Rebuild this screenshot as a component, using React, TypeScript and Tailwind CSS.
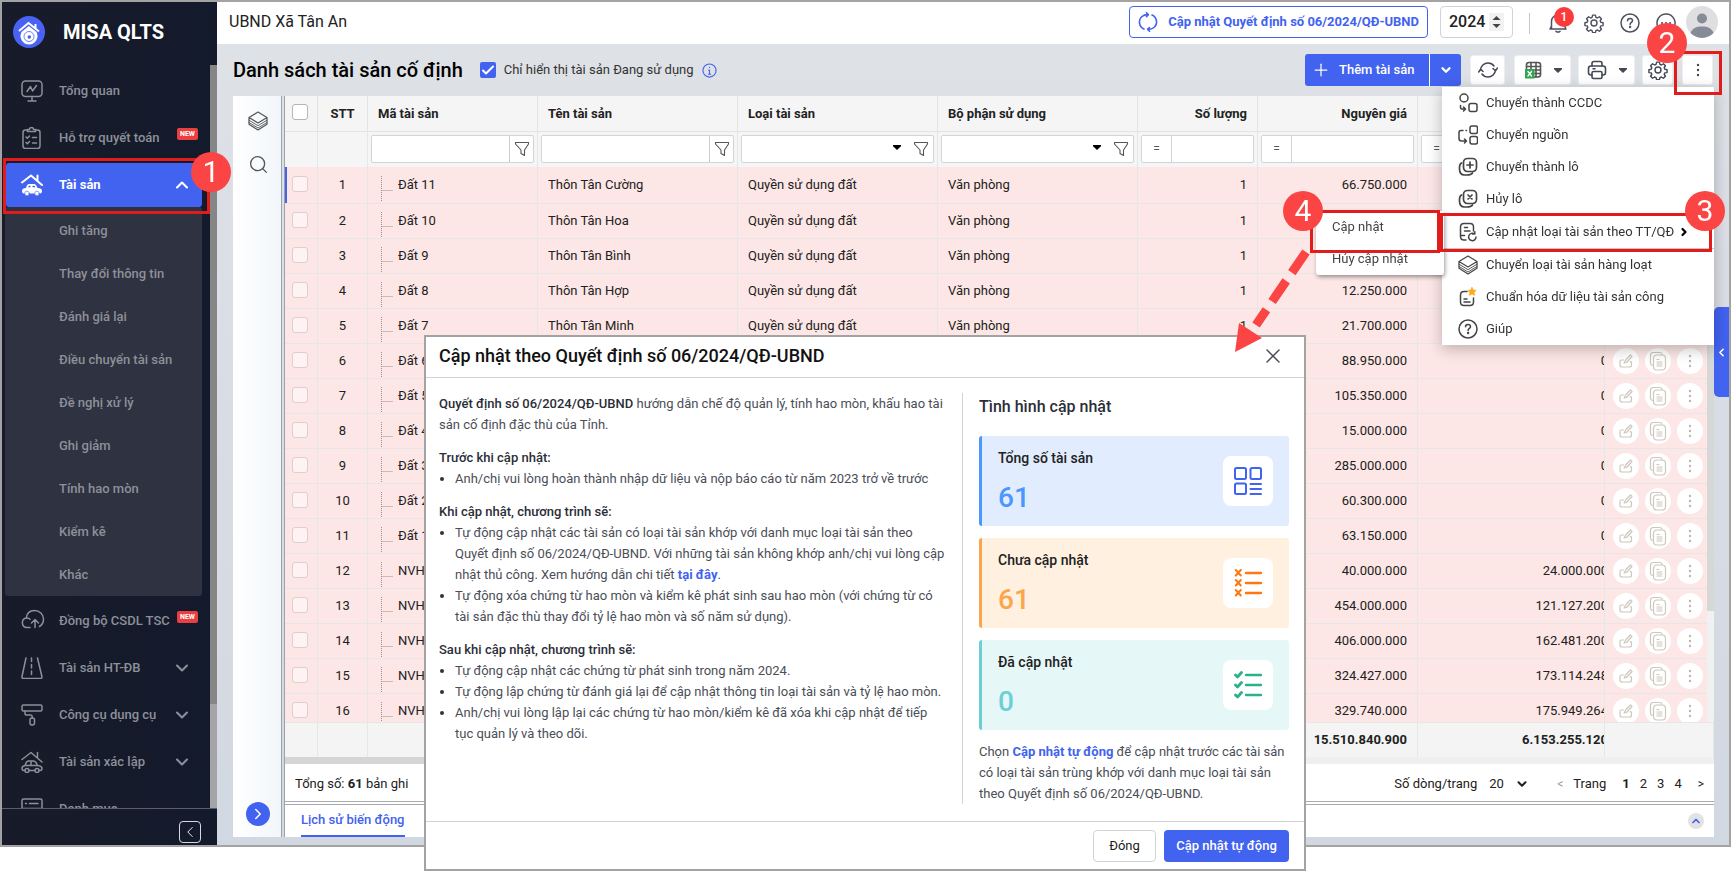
import React from 'react'
import { ChevronDown, ChevronLeft, ChevronRight, ChevronUp, Plus, Search, X } from 'lucide-react'
import clsx from 'clsx'

type IconProps = { className?: string }

interface AssetRow {
  code: string
  name?: string
  type?: string
  dept?: string
  qty?: string
  cost: string
  wear?: string
}

const LAND = { type: 'Quyền sử dụng đất', dept: 'Văn phòng', qty: '1' }

const ROWS: AssetRow[] = [
  { code: 'Đất 11', name: 'Thôn Tân Cường', ...LAND, cost: '66.750.000' },
  { code: 'Đất 10', name: 'Thôn Tân Hoa', ...LAND, cost: '' },
  { code: 'Đất 9', name: 'Thôn Tân Bình', ...LAND, cost: '' },
  { code: 'Đất 8', name: 'Thôn Tân Hợp', ...LAND, cost: '12.250.000' },
  { code: 'Đất 7', name: 'Thôn Tân Minh', ...LAND, cost: '21.700.000' },
  { code: 'Đất 6', cost: '88.950.000', wear: '0' },
  { code: 'Đất 5', cost: '105.350.000', wear: '0' },
  { code: 'Đất 4', cost: '15.000.000', wear: '0' },
  { code: 'Đất 3', cost: '285.000.000', wear: '0' },
  { code: 'Đất 2', cost: '60.300.000', wear: '0' },
  { code: 'Đất 1', cost: '63.150.000', wear: '0' },
  { code: 'NVH', cost: '40.000.000', wear: '24.000.000' },
  { code: 'NVH', cost: '454.000.000', wear: '121.127.200' },
  { code: 'NVH', cost: '406.000.000', wear: '162.481.200' },
  { code: 'NVH', cost: '324.427.000', wear: '173.114.248' },
  { code: 'NVH', cost: '329.740.000', wear: '175.949.264' },
]

const SUB_ITEMS = [
  'Ghi tăng',
  'Thay đổi thông tin',
  'Đánh giá lại',
  'Điều chuyển tài sản',
  'Đề nghị xử lý',
  'Ghi giảm',
  'Tính hao mòn',
  'Kiểm kê',
  'Khác',
]

function Svg({ className, size = 22, box = 22, width = 1.5, children }: IconProps & { size?: number; box?: number; width?: number; children: React.ReactNode }) {
  return (
    <svg className={clsx('shrink-0', className)} width={size} height={size} viewBox={`0 0 ${box} ${box}`} fill="none"
      stroke="currentColor" strokeWidth={width} strokeLinecap="round" strokeLinejoin="round" aria-hidden="true">
      {children}
    </svg>
  )
}

/* ---------- sidebar icons ---------- */

const MonitorIcon = () => (
  <Svg>
    <rect x="1" y="1" width="20" height="15.5" rx="3.5" />
    <path d="M6 11.5 9.5 6.5 11.5 11 15.5 5.5M11 16.5V21M7 21h8" />
  </Svg>
)

const ClipboardIcon = () => (
  <Svg>
    <rect x="2" y="3" width="17" height="18.5" rx="2.5" />
    <path d="M6.5 4.5V2.5h2a2 2 0 0 1 4 0h2v2z" fill="#181b29" />
    <path d="m5 10 1.3 1.3L8.5 9M5 15.5l1.3 1.3 2.2-2.3M11.5 10.5h4M11.5 16h4" />
  </Svg>
)

const HouseCarIcon = ({ filled }: { filled?: boolean }) => (
  <Svg width={filled ? 2 : 1.5}>
    <path d="M1 8.5 10 1.5 21 11M16.5 6V1.5" />
    {filled ? (
      <>
        <path d="M5 14c.8-2.500 1.500-4 3-4h5c1.500 0 2.600 1.500 3.500 4 3 .3 4.500 1 4.500 3 0 1.500-.5 2.500-2 2.500H3c-1.500 0-2-1-2-2.500 0-2 1.500-3 4-3z" fill="currentColor" stroke="none" />
        <path d="M7 13.300c.5-1 .8-1.500 1.500-1.500h1v1.500zM11.500 11.800H13c.8 0 1.200.7 1.600 1.500h-3.100z" fill="#4262f0" stroke="none" />
        <circle cx="6" cy="19.500" r="2.300" fill="currentColor" stroke="#4262f0" strokeWidth="0.600" />
        <circle cx="16" cy="19.500" r="2.300" fill="currentColor" stroke="#4262f0" strokeWidth="0.600" />
      </>
    ) : (
      <>
        <path d="M4 14.500c.8-2.500 1.800-4.500 3.500-4.500h5c1.800 0 3 2 4 4.500 3 .3 4.500 1 4.500 3 0 1.500-.6 2-2 2h-.8M13.800 19.500H8.200M3.800 19.500H3c-1.500 0-2-.8-2-2 0-1.800 1-2.700 3-3h12.500M10 10.500v3.800" />
        <circle cx="6" cy="19.500" r="2" />
        <circle cx="16" cy="19.500" r="2" />
      </>
    )}
  </Svg>
)

const CloudIcon = () => (
  <Svg size={24} box={24}>
    <path d="M9 18.500H6a4.800 4.800 0 0 1-.8-9.500C5.800 4.500 9 1.500 13.500 1.500c5 0 9 3.700 9 8.500 0 3.500-1.500 6-4 7.500" />
    <path d="M5.500 9c1.300-.2 2.600.2 3.500 1.200M14 18.500V11M10.500 14l3.500-3.500 3.500 3.500" />
  </Svg>
)

const RoadIcon = () => (
  <Svg>
    <path d="M5 1 1 19.500c-.2 1.500.5 2 1.500 2h17c1 0 1.600-.5 1.400-2L16.500 1" />
    <path d="M10.500 1v17.500" strokeDasharray="3.500 3" />
  </Svg>
)

const RollerIcon = () => (
  <Svg>
    <rect x="1" y="1" width="20" height="6" rx="1.500" />
    <path d="M4 7v2.500c0 1.200.6 1.600 2 1.600h3.500c1.200 0 1.700.5 1.700 1.700V14" />
    <rect x="9" y="14" width="4.500" height="7" rx="2" />
  </Svg>
)

const ListIcon = () => (
  <Svg>
    <rect x="1" y="1" width="20" height="20" rx="1.500" />
    <path d="M1 10.500h20M4.500 5.500h1M8.500 5.500H17" />
  </Svg>
)

/* ---------- toolbar and table icons ---------- */

const LayersIcon = ({ className }: IconProps) => (
  <Svg className={className} size={20} box={20} width={1.2}>
    <path d="M10 1 1 6.500l9 5.500 9-5.500zM1 6.500v6.800L10 19l9-5.700V6.500" />
    <path d="m1 9.200 9 5.500 9-5.500M1 11.500l9 5.500 9-5.500" strokeWidth="0.900" />
  </Svg>
)

const GearIcon = ({ className }: IconProps) => (
  <Svg className={className} size={20} box={24} width={1.7}>
    <circle cx="12" cy="12" r="3.600" />
    <path d="M10.300 2.500h3.400l.6 2.700 1.800.8 2.400-1.500 2.400 2.400-1.500 2.400.8 1.800 2.700.6v3.400l-2.700.3-.8 1.700 1.500 2.400-2.400 2.400-2.400-1.500-1.800.8-.6 2.400h-3.400l-.6-2.400-1.800-.8-2.400 1.500-2.400-2.400 1.500-2.400-.8-1.700-2.700-.3v-3.400l2.700-.6.8-1.800-1.500-2.400 2.400-2.400L8 6l1.700-.8z" />
  </Svg>
)

const HelpIcon = ({ className }: IconProps) => (
  <Svg className={className} size={20} box={20}>
    <circle cx="10" cy="10" r="9" />
    <path d="M7.500 7.800C7.500 6.300 8.600 5.500 10 5.500s2.500.9 2.500 2.200c0 1.700-2.400 1.800-2.400 3.700" />
    <circle cx="10.100" cy="14" r="0.500" fill="currentColor" />
  </Svg>
)

const FunnelIcon = () => (
  <Svg size={16} box={16} width={1.1}>
    <path d="M1.500 1.500h13v1.500L10.500 9v5.500L7 12.500V9L1.500 3z" />
  </Svg>
)

const Caret = ({ className }: IconProps) => (
  <svg className={clsx('shrink-0', className)} width="8" height="5" viewBox="0 0 8 5" fill="currentColor" aria-hidden="true">
    <path d="M0 0h8v1.200L4 5 0 1.200z" />
  </svg>
)

const Dots = ({ className }: IconProps) => (
  <svg className={className} width="4" height="14" viewBox="0 0 4 14" fill="currentColor" aria-hidden="true">
    <circle cx="2" cy="2" r="1.200" />
    <circle cx="2" cy="7" r="1.200" />
    <circle cx="2" cy="12" r="1.200" />
  </svg>
)

const SyncIcon = ({ className }: IconProps) => (
  <Svg className={className} size={20} box={20}>
    <path d="M2.500 10A7.500 7.500 0 0 1 10 3c2.500 0 4.500 1 6 3M17.500 10a7.500 7.500 0 0 1-7.500 7c-2.500 0-4.500-1-6-3" />
    <path d="m15 8.500 2.500 2.300L19.500 8M.7 12l2-2.700L5 11.500" />
  </Svg>
)

const DecisionSyncIcon = () => (
  <Svg size={20} box={20} width={1.6}>
    <path d="M6 17A7.500 7.500 0 0 1 4 4.500C5.500 3.200 7.500 2.500 10 2.600M14 3a7.500 7.500 0 0 1 2 12.500c-1.500 1.300-3.500 2-6 1.900" />
    <path d="m8.500.8 1.800 1.900-1.800 1.900M11.500 15.500l-1.800 1.900 1.800 1.900" />
  </Svg>
)

const ExcelIcon = () => (
  <Svg size={18} box={18} width={1.6} className="text-[#555]">
    <rect x="2.500" y="1.500" width="14" height="14.500" rx="2.500" />
    <path d="M2.500 5.500h14M2.500 9h14M2.500 12.500h14M7 1.500V16M12 1.500V16" />
    <rect x="1" y="8" width="9.500" height="9.500" fill="#2fa84f" stroke="none" />
    <path d="m4 10.500 3.500 4.500M7.500 10.500 4 15" stroke="#fff" strokeWidth="1.300" />
  </Svg>
)

const PrinterIcon = () => (
  <Svg size={20} box={20} width={1.6}>
    <path d="M5 6V3.500C5 2 6 1.500 7 1.500h6c1 0 2 .5 2 2V6" />
    <path d="M5 15H4c-1.500 0-2.500-1-2.500-2.500v-4C1.500 7 2.500 6 4 6h12c1.500 0 2.500 1 2.500 2.500v4c0 1.500-1 2.500-2.500 2.500h-1" />
    <rect x="5" y="11.500" width="10" height="7" rx="1.500" />
    <path d="M6 8.800h2" />
  </Svg>
)

const EditIcon = () => (
  <Svg size={14} box={14} width={1.2}>
    <path d="M7 5.500 11.500 1 13 2.500 7.500 8.500 5 9zM4.500 6h-2C1.500 6 1 6.500 1 7.500V11c0 1.200.6 2 2 2h7.500c1.300 0 2-.8 2-2V8.500c0-.7-.6-1-1.200-.7" />
  </Svg>
)

const CopyIcon = () => (
  <Svg size={20} box={20} width={1.2}>
    <path d="M4.500 14.500C3 14.200 2.500 13 2.500 12V4.500c0-2 1-3 3-3h6c1.500 0 2.300.6 2.500 1.700" />
    <rect x="5.500" y="4" width="12" height="15" rx="3.500" />
    <path d="M9 8.500h2M9 11h5M9 13h5M9 15h5" />
  </Svg>
)

/* ---------- popup menu icons ---------- */

const ConvertIcon = () => (
  <Svg size={20} box={20}>
    <circle cx="6" cy="5" r="4" />
    <rect x="11" y="10.500" width="8" height="8" rx="2" />
    <path d="M2.500 12.500v2c0 1 .5 1.500 1.500 1.500h3M5.500 14l2 2-2 2" />
  </Svg>
)

const SourceIcon = () => (
  <Svg size={20} box={20}>
    <rect x="12" y="1" width="7.500" height="7.500" rx="2" />
    <rect x="12" y="11.500" width="7.500" height="7.500" rx="2" />
    <path d="M8.500 5.500H8M5 5.500H3c-1 0-2 .5-2 2v6c0 1.500 1 2.500 2.500 2.500H8M6.500 14l2 2-2 2" />
  </Svg>
)

const LotIcon = ({ cross }: { cross?: boolean }) => (
  <Svg size={20} box={20} width={1.7}>
    <rect x="5.500" y="1.500" width="13" height="13" rx="4" />
    <path d="M3.500 6c-2 1-2 3-2 4.500V12c0 4 2 6 5 6H9c2.500 0 4.500-.5 5.500-2" />
    {cross ? <path d="m10 6 4 4M14 6l-4 4" /> : <path d="M12 5v6M9 8h6" />}
  </Svg>
)

const DocRefreshIcon = () => (
  <Svg size={20} box={20}>
    <path d="M8 18H6c-2 0-3.500-1-3.500-3.500V5c0-2.500 1.500-3.500 3.500-3.500h6c2 0 3.500 1 3.500 3.500v4M6.500 5.500h3M6.500 9H12M2.500 13.500h4" />
    <path d="M18 15a3.700 3.700 0 1 1-1.500-3M14.500 12h2.300V9.800" />
  </Svg>
)

const DocStarIcon = () => (
  <Svg size={20} box={20}>
    <path d="M9 4.500H6C3.800 4.500 2.500 5.700 2.500 8v7c0 2.300 1.300 3.500 3.500 3.500h6c2.200 0 3.500-1.200 3.500-3.500v-4M6 12h3M6 15h6" />
    <path d="m14 .3 1.300 2.700 3 .4-2.200 2.100.5 3L14 7.100l-2.600 1.400.5-3-2.200-2.100 3-.4z" fill="#fbad18" stroke="#fbad18" strokeWidth="0.600" />
  </Svg>
)

/* ---------- blocks ---------- */

function NavItem({ icon, label, badge, chevron }: { icon: React.ReactNode; label: string; badge?: boolean; chevron?: boolean }) {
  return (
    <a href="#" className="mb-[3px] flex h-11 shrink-0 items-center pr-3 pl-[19px]">
      <span className="w-[38px]">{icon}</span>
      <span className="flex-1 whitespace-nowrap">{label}</span>
      {badge && (
        <span className="mb-2 rounded-xs bg-[#ea3f3f] px-[3px] text-[7px] leading-3 font-bold text-white">NEW</span>
      )}
      {chevron && <ChevronDown size={20} strokeWidth={2.5} className="mr-1.5" />}
    </a>
  )
}

function Sidebar() {
  return (
    <aside className="flex w-[215px] shrink-0 flex-col bg-linear-to-r from-[#181b29] to-[#131a2c] text-[13px] font-medium text-[#8d9099]">
      <div className="flex h-[63px] shrink-0 items-center gap-[18px] pb-[3px] pl-[11px]">
        <svg width="32" height="32" viewBox="0 0 32 32" fill="none" aria-hidden="true">
          <circle cx="16" cy="16" r="16" fill="#4a62f4" />
          <path d="M6 15 15.500 7 26 15.500M22.500 12V8" stroke="#fff" strokeWidth="2" />
          <path d="M15.800 10 8.500 16a8.500 8.500 0 1 0 15 0z" fill="#fff" />
          <circle cx="16" cy="20.500" r="5" fill="#fff" stroke="#4a62f4" strokeWidth="0.800" />
          <circle cx="16.300" cy="21" r="1.800" fill="#4a62f4" />
        </svg>
        <span className="text-xl font-bold text-white">MISA QLTS</span>
      </div>

      <div className="flex min-h-0 flex-1">
        <nav className="flex min-w-0 flex-1 flex-col overflow-hidden pt-1">
          <NavItem icon={<MonitorIcon />} label="Tổng quan" />
          <NavItem icon={<ClipboardIcon />} label="Hỗ trợ quyết toán" badge />
          <a href="#" className="mr-2 ml-1 flex h-11 shrink-0 items-center rounded-[3px] bg-[#4262f0] pr-2.5 pl-[15px] font-bold text-white">
            <span className="w-[38px]"><HouseCarIcon filled /></span>
            <span className="flex-1">Tài sản</span>
            <ChevronUp size={20} strokeWidth={2.5} />
          </a>
          <ul className="mr-2 mb-[3px] ml-[3px] shrink-0 rounded-[3px] bg-[#2f3240] pt-0.5">
            {SUB_ITEMS.map(item => (
              <li key={item}>
                <a href="#" className="flex h-[43px] items-center pl-[54px]">{item}</a>
              </li>
            ))}
          </ul>
          <NavItem icon={<CloudIcon />} label="Đồng bộ CSDL TSC" badge />
          <NavItem icon={<RoadIcon />} label="Tài sản HT-ĐB" chevron />
          <NavItem icon={<RollerIcon />} label="Công cụ dụng cụ" chevron />
          <NavItem icon={<HouseCarIcon />} label="Tài sản xác lập" chevron />
          <NavItem icon={<ListIcon />} label="Danh mục" />
        </nav>
        <div className="w-[7px] bg-[#a3a3a8]">
          <div className="h-[86%] bg-[#868686]" />
        </div>
      </div>

      <div className="flex h-[37px] shrink-0 items-end justify-end border-t border-[#5b5e68] pr-4 pb-0.5">
        <button aria-label="Thu gọn" className="flex size-[22px] items-center justify-center rounded border border-[#d8d9dc] text-white">
          <ChevronLeft size={18} strokeWidth={1.2} />
        </button>
      </div>
    </aside>
  )
}

function TopBar() {
  return (
    <header className="flex h-[42px] shrink-0 items-center bg-white pr-[11px] pl-3 text-[#212121]">
      <span className="flex-1 pb-0.5 text-base">UBND Xã Tân An</span>
      <button className="mb-0.5 flex h-8 items-center gap-2.5 rounded border border-[#4262f0] px-2 text-[13px] font-bold text-[#4262f0]">
        <DecisionSyncIcon />
        <span>Cập nhật Quyết định số 06/2024/QĐ-UBND</span>
      </button>
      <label className="relative mb-0.5 ml-3 flex h-8 w-[73px] items-center rounded border border-[#d0d3db] text-base font-medium">
        <select aria-label="Năm" className="h-full w-full appearance-none bg-transparent pl-2 outline-none">
          <option>2024</option>
        </select>
        <svg className="pointer-events-none absolute right-2 bg-[#f1f1f1]" width="15" height="18" viewBox="0 0 15 18" fill="#444" aria-hidden="true">
          <path d="M3.500 7 7.500 3l4 4zM3.500 11l4 4 4-4z" />
        </svg>
      </label>
      <span className="mr-[18px] ml-4 h-[21px] w-px bg-[#c3c7d1]" />
      <div className="flex items-center gap-4 text-[#4d5160]">
        <button aria-label="Thông báo" className="relative">
          <Svg size={20} box={20}>
            <path d="M3.500 15V8.500C3.500 4.500 6.500 2 10 2s6.500 2.500 6.500 6.500V13l1.500 3H2l1.500-3M8 18.300c1 .8 3 .8 4 0" />
          </Svg>
          <span className="absolute -top-1.5 left-1.5 flex size-5 items-center justify-center rounded-full bg-[#fb3b3b] text-xs font-medium text-white">1</span>
        </button>
        <button aria-label="Thiết lập"><GearIcon /></button>
        <button aria-label="Trợ giúp"><HelpIcon /></button>
        <button aria-label="Trò chuyện">
          <Svg size={20} box={20}>
            <path d="M10 1a9 9 0 1 0 4.500 16.800L18.500 19l-1-4A9 9 0 0 0 10 1z" />
            <path d="M6 10h.1M10 10h.1M14 10h.1" strokeWidth="2" />
          </Svg>
        </button>
      </div>
      <svg className="mb-0.5 ml-2.5" width="32" height="32" viewBox="0 0 32 32" role="img" aria-label="Tài khoản">
        <circle cx="16" cy="16" r="16" fill="#dfdfe1" />
        <circle cx="16" cy="12.500" r="5" fill="#868b98" />
        <path d="M4.500 27C6.500 22 10 20.500 16 20.500S25.500 22 27.500 27a16 16 0 0 1-23 0z" fill="#868b98" />
      </svg>
    </header>
  )
}

const TOOL_BTN = 'flex h-[30px] items-center justify-center rounded-[3px] border border-[#eceef2] bg-white text-[#444856]'

function Toolbar() {
  return (
    <div className="flex h-[52px] shrink-0 items-center px-4">
      <h1 className="text-xl font-medium text-black">Danh sách tài sản cố định</h1>
      <label className="ml-[17px] flex flex-1 items-center gap-2 text-[13px] text-[#333]">
        <input type="checkbox" defaultChecked className="peer sr-only" />
        <span className="flex size-4 items-center justify-center rounded-xs bg-[#4262f0] text-white">
          <Svg size={14} box={14} width={2}><path d="m2 7.500 3 3L12 3.500" /></Svg>
        </span>
        Chỉ hiển thị tài sản Đang sử dụng
        <Svg size={15} box={16} width={1.2} className="text-[#4262f0]">
          <circle cx="8" cy="8" r="7" />
          <path d="M8 7.500V12M7 7.500h1M7 12h2.300M8 4.600v.2" />
        </Svg>
      </label>
      <div className="flex h-8 items-center rounded-[3px] bg-[#4262f0] text-[13px] font-medium text-white">
        <button className="flex h-full w-[125px] items-center gap-2 border-r border-white pl-1.5">
          <Plus size={20} strokeWidth={1.5} />
          Thêm tài sản
        </button>
        <button aria-label="Thêm" className="flex h-full w-[31px] items-center justify-center">
          <ChevronDown size={14} strokeWidth={4} />
        </button>
      </div>
      <button aria-label="Tải lại" className={clsx(TOOL_BTN, 'ml-[9px] w-[35px]')}><SyncIcon /></button>
      <button aria-label="Xuất Excel" className={clsx(TOOL_BTN, 'ml-[9px] w-[57px] gap-3')}><ExcelIcon /><Caret /></button>
      <button aria-label="In" className={clsx(TOOL_BTN, 'ml-[7px] w-[57px] gap-3')}><PrinterIcon /><Caret /></button>
      <button aria-label="Tùy chỉnh" className={clsx(TOOL_BTN, 'ml-[7px] w-[31px]')}><GearIcon /></button>
      <button aria-label="Khác" className={clsx(TOOL_BTN, 'ml-[9px] w-[31px]')}><Dots /></button>
    </div>
  )
}

const FILTER_BOX = 'flex h-7 w-full items-center rounded-xs border border-[#d2d4d6] bg-white text-[#555]'
const HEAD_LINE = 'border-r border-b border-[#e2e4e4]'
const HEAD = 'border-r border-b border-[#e2e4e4] px-2.5 font-bold text-[#222]'
const FILTER_CELL = 'border-r border-[#e6e8e8] px-[3px] pt-[3px] pb-1 font-normal'
const CELL_LINE = 'border-r border-b border-[#e7e6e6]'
const CELL = 'border-r border-b border-[#e7e6e6] px-2.5'
const TOTAL_LINE = 'sticky bottom-0 border-t border-r border-[#e6e8e8] bg-[#f4f4f4]'
const TOTAL = 'sticky bottom-0 border-t border-r border-[#e6e8e8] bg-[#f4f4f4] px-2.5 text-right font-bold'

function TextFilter({ label }: { label: string }) {
  return (
    <div className={FILTER_BOX}>
      <input aria-label={label} className="h-full min-w-0 flex-1 outline-none" />
      <button aria-label={`Lọc ${label}`} className="flex h-full w-6 items-center justify-center border-l border-[#c9cbcd]"><FunnelIcon /></button>
    </div>
  )
}

function SelectFilter({ label }: { label: string }) {
  return (
    <div className={FILTER_BOX}>
      <select aria-label={label} className="h-full min-w-0 flex-1 appearance-none outline-none"><option /></select>
      <Caret className="mb-1 text-black" />
      <button aria-label={`Lọc ${label}`} className="flex h-full w-8 items-center justify-center pl-2"><FunnelIcon /></button>
    </div>
  )
}

function NumberFilter({ label }: { label: string }) {
  return (
    <div className={FILTER_BOX}>
      <button aria-label={`Điều kiện ${label}`} className="h-full w-[30px] border-r border-[#d2d4d6] text-xs">=</button>
      <input aria-label={label} className="h-full min-w-0 flex-1 outline-none" />
    </div>
  )
}

function TickBox({ label, head }: { label: string; head?: boolean }) {
  return (
    <input type="checkbox" aria-label={label}
      className={clsx('block size-4 appearance-none rounded-[3px] border', head ? 'border-[#b5b5b5] bg-white' : 'border-[#dccfce] bg-[#fef3f2]')} />
  )
}

function RowActions() {
  const cls = 'flex size-[26px] items-center justify-center rounded-full bg-white'
  return (
    <div className="flex gap-1.5 text-[#cdc7bd]">
      <button aria-label="Sửa" className={cls}><EditIcon /></button>
      <button aria-label="Nhân bản" className={cls}><CopyIcon /></button>
      <button aria-label="Khác" className={cls}><Dots className="text-[#bdb7b0]" /></button>
    </div>
  )
}

function AssetTable() {
  return (
    <div className="relative min-h-0 flex-1 overflow-hidden bg-[#f4f4f4]">
      <div className="h-full overflow-hidden">
        <table className="w-full table-fixed border-separate border-spacing-0 text-[13px] text-[#212121]">
          <colgroup>
            <col className="w-[33px]" />
            <col className="w-[50px]" />
            <col className="w-[170px]" />
            <col className="w-[200px]" />
            <col className="w-[200px]" />
            <col className="w-[200px]" />
            <col className="w-[120px]" />
            <col className="w-[160px]" />
            <col />
            <col className="w-[109px]" />
          </colgroup>
          <thead className="bg-[#f5f5f5]">
            <tr className="h-9">
              <th className={clsx(HEAD_LINE, 'pb-1 pl-[7px]')}><TickBox head label="Chọn tất cả" /></th>
              <th className={HEAD}>STT</th>
              <th className={clsx(HEAD, 'text-left')}>Mã tài sản</th>
              <th className={clsx(HEAD, 'text-left')}>Tên tài sản</th>
              <th className={clsx(HEAD, 'text-left')}>Loại tài sản</th>
              <th className={clsx(HEAD, 'text-left')}>Bộ phận sử dụng</th>
              <th className={clsx(HEAD, 'text-right')}>Số lượng</th>
              <th className={clsx(HEAD, 'text-right')}>Nguyên giá</th>
              <th className={HEAD} />
              <th className={HEAD} />
            </tr>
            <tr className="h-[35px]">
              <th className={FILTER_CELL} />
              <th className={FILTER_CELL} />
              <th className={FILTER_CELL}><TextFilter label="Mã tài sản" /></th>
              <th className={FILTER_CELL}><TextFilter label="Tên tài sản" /></th>
              <th className={FILTER_CELL}><SelectFilter label="Loại tài sản" /></th>
              <th className={FILTER_CELL}><SelectFilter label="Bộ phận sử dụng" /></th>
              <th className={FILTER_CELL}><NumberFilter label="Số lượng" /></th>
              <th className={FILTER_CELL}><NumberFilter label="Nguyên giá" /></th>
              <th className={FILTER_CELL}><NumberFilter label="Hao mòn lũy kế" /></th>
              <th className={FILTER_CELL} />
            </tr>
          </thead>
          <tbody className="bg-[#fce7e6]">
            {ROWS.map((row, i) => (
              <tr key={i} className={i === 0 ? 'h-[37px]' : 'h-[35px]'}>
                <td className={clsx(CELL_LINE, 'pb-[3px] pl-[7px]', i === 0 && 'shadow-[inset_2px_0_0_#4262f0]')}>
                  <TickBox label={`Chọn dòng ${i + 1}`} />
                </td>
                <td className={clsx(CELL, 'text-center')}>{i + 1}</td>
                <td className={clsx(CELL_LINE, 'pl-[13px]')}>
                  <div className="flex items-center gap-[5px]">
                    <svg className="mt-2" width="12" height="26" viewBox="0 0 12 26" stroke="#9a8f8f" strokeDasharray="1 1" aria-hidden="true">
                      <path d="M0.500 0v26M0.500 14.500H12" fill="none" />
                    </svg>
                    {row.code}
                  </div>
                </td>
                <td className={CELL}>{row.name}</td>
                <td className={CELL}>{row.type}</td>
                <td className={CELL}>{row.dept}</td>
                <td className={clsx(CELL, 'text-right')}>{row.qty}</td>
                <td className={clsx(CELL, 'text-right')}>{row.cost}</td>
                <td className={clsx(CELL_LINE, 'overflow-hidden')}>
                  <div className="w-[190px] text-right">{row.wear}</div>
                </td>
                <td className={clsx(CELL_LINE, 'pl-2')}><RowActions /></td>
              </tr>
            ))}
          </tbody>
          <tfoot>
            <tr className="h-[35px]">
              <td className={TOTAL} />
              <td className={TOTAL} />
              <td className={TOTAL} />
              <td className={TOTAL} />
              <td className={TOTAL} />
              <td className={TOTAL} />
              <td className={TOTAL} />
              <td className={TOTAL}>15.510.840.900</td>
              <td className={clsx(TOTAL_LINE, 'overflow-hidden')}>
                <div className="w-[190px] text-right font-bold">6.153.255.120</div>
              </td>
              <td className={TOTAL} />
            </tr>
          </tfoot>
        </table>
      </div>
      <div className="absolute top-[71px] right-0 bottom-[35px] w-[7px] bg-[#f0f2f1]">
        <div className="h-4/5 bg-[#d5d8d6]" />
      </div>
    </div>
  )
}

function Pager() {
  return (
    <div className="flex h-[37px] shrink-0 items-center bg-white px-2.5 pt-0.5 text-[13px] text-[#212121]">
      <span className="flex-1">Tổng số: <b>61</b> bản ghi</span>
      <label className="flex items-center">
        Số dòng/trang
        <span className="relative ml-3 flex items-center">
          <select className="w-9 appearance-none bg-transparent outline-none"><option>20</option></select>
          <ChevronDown size={14} strokeWidth={3.5} className="-ml-2.5" />
        </span>
      </label>
      <div className="ml-7 flex items-center">
        <button aria-label="Trang trước" className="text-xs text-[#999]">&lt;</button>
        <span className="ml-2.5">Trang</span>
        <div className="ml-4 flex gap-2.5">
          <a href="#" className="font-bold">1</a>
          <a href="#">2</a>
          <a href="#">3</a>
          <a href="#">4</a>
        </div>
        <button aria-label="Trang sau" className="ml-4 text-xs">&gt;</button>
      </div>
    </div>
  )
}

const MENU_ITEMS = [
  { icon: <ConvertIcon />, label: 'Chuyển thành CCDC' },
  { icon: <SourceIcon />, label: 'Chuyển nguồn' },
  { icon: <LotIcon />, label: 'Chuyển thành lô' },
  { icon: <LotIcon cross />, label: 'Hủy lô' },
  { icon: <DocRefreshIcon />, label: 'Cập nhật loại tài sản theo TT/QĐ', sub: true },
  { icon: <LayersIcon />, label: 'Chuyển loại tài sản hàng loạt' },
  { icon: <DocStarIcon />, label: 'Chuẩn hóa dữ liệu tài sản công' },
  { icon: <HelpIcon />, label: 'Giúp' },
]

function PopupMenus() {
  return (
    <>
      <div role="menu" className="absolute top-[87px] right-[17px] w-[272px] bg-white text-[13px] text-[#333] shadow-[0_4px_14px_rgba(0,0,0,0.25)]">
        {MENU_ITEMS.map(item => (
          <button key={item.label} role="menuitem"
            className={clsx('flex w-full items-center gap-2 pl-4 text-left', item.sub ? 'h-[34px] border-b border-[#c4c4c4]' : 'h-8')}>
            <span className="text-[#444]">{item.icon}</span>
            {item.label}
            {item.sub && <ChevronRight size={12} strokeWidth={4.5} className="-ml-1 text-black" />}
          </button>
        ))}
      </div>
      <div role="menu" className="absolute top-[211px] right-[287px] w-32 rounded-[3px] bg-white text-[13px] text-[#444] shadow-[1px_2px_4px_rgba(0,0,0,0.4)]">
        <button role="menuitem" className="block h-8 w-full pl-4 text-left">Cập nhật</button>
        <button role="menuitem" className="block h-8 w-full pl-4 text-left">Hủy cập nhật</button>
      </div>
    </>
  )
}

function StatCard({ label, value, tone, icon }: { label: string; value: number; tone: string; icon: React.ReactNode }) {
  return (
    <div className={clsx('flex h-[90px] items-center justify-between rounded-[3px] border-l-[3px] px-4', tone)}>
      <div className="flex flex-col gap-3.5">
        <span className="text-sm leading-5 font-medium text-[#212121]">{label}</span>
        <span className="text-[28px] leading-8 font-medium">{value}</span>
      </div>
      <span className="flex size-[50px] items-center justify-center rounded-lg bg-white">{icon}</span>
    </div>
  )
}

const ChecklistIcon = ({ cross }: { cross?: boolean }) => (
  <Svg size={28} box={28} width={2} className={cross ? 'text-[#ff7710]' : 'text-[#2bb28c]'}>
    {[4, 14, 24].map(y => (
      <React.Fragment key={y}>
        <path d={`M12 ${y}h15`} strokeWidth="2.400" />
        {cross
          ? <path d={`m1.800 ${y - 3} 5 5.500M6.800 ${y - 3}l-5 5.500`} />
          : <path d={`m1.500 ${y} 2 2 4-4.500`} strokeWidth="2.800" />}
      </React.Fragment>
    ))}
  </Svg>
)

const GridIcon = () => (
  <Svg size={28} box={28} width={2} className="text-[#4262f0]">
    <rect x="1" y="1" width="11" height="11" rx="1.500" />
    <rect x="16.500" y="1" width="10.500" height="11" rx="1.500" />
    <rect x="1" y="16.500" width="11" height="10.500" rx="1.500" />
    <path d="M16.500 17H27M16.500 22H27M16.500 27H27" />
  </Svg>
)

function UpdateDialog() {
  const list = 'list-disc pl-4 marker:text-[#333]'
  const strong = 'font-medium text-[#2b2e38]'
  return (
    <section role="dialog" aria-labelledby="update-title"
      className="absolute bottom-0 left-[424px] flex w-[882px] flex-col border-2 border-[#a3a3a3] bg-white text-[13px] leading-[21px] text-[#4b4e57]">
      <header className="flex h-[41px] items-center justify-between border-b border-[#d3d3d3] pr-5 pb-0.5 pl-[13px]">
        <h2 id="update-title" className="text-lg font-medium text-[#111]">Cập nhật theo Quyết định số 06/2024/QĐ-UBND</h2>
        <button aria-label="Đóng"><X size={24} strokeWidth={1.5} className="-mr-px" /></button>
      </header>

      <div className="flex pt-[15px] pr-[15px] pb-[17px] pl-[13px]">
        <div className="flex flex-1 flex-col gap-3 border-r border-[#d3d3d3] pr-4">
          <p><b className={strong}>Quyết định số 06/2024/QĐ-UBND</b> hướng dẫn chế độ quản lý, tính hao mòn, khấu hao tài sản cố định đặc thù của Tỉnh.</p>
          <div>
            <p className={strong}>Trước khi cập nhật:</p>
            <ul className={list}>
              <li>Anh/chị vui lòng hoàn thành nhập dữ liệu và nộp báo cáo từ năm 2023 trở về trước</li>
            </ul>
          </div>
          <div>
            <p className={strong}>Khi cập nhật, chương trình sẽ:</p>
            <ul className={list}>
              <li>
                Tự động cập nhật các tài sản có loại tài sản khớp với danh mục loại tài sản theo Quyết định số 06/2024/QĐ-UBND.
                Với những tài sản không khớp anh/chị vui lòng cập nhật thủ công. Xem hướng dẫn chi
                tiết <a href="#" className="font-bold text-[#4262f0]">tại đây</a>.
              </li>
              <li>Tự động xóa chứng từ hao mòn và kiểm kê phát sinh sau hao mòn (với chứng từ có tài sản đặc thù thay đổi tỷ lệ hao mòn và số năm sử dụng).</li>
            </ul>
          </div>
          <div>
            <p className={strong}>Sau khi cập nhật, chương trình sẽ:</p>
            <ul className={list}>
              <li>Tự động cập nhật các chứng từ phát sinh trong năm 2024.</li>
              <li>Tự động lập chứng từ đánh giá lại để cập nhật thông tin loại tài sản và tỷ lệ hao mòn.</li>
              <li>Anh/chị vui lòng lập lại các chứng từ hao mòn/kiểm kê đã xóa khi cập nhật để tiếp tục quản lý và theo dõi.</li>
            </ul>
          </div>
        </div>

        <div className="w-[326px] pl-4">
          <h3 className="mb-[15px] text-base leading-7 font-medium text-[#2b2e38]">Tình hình cập nhật</h3>
          <div className="flex flex-col gap-3">
            <StatCard label="Tổng số tài sản" value={61} icon={<GridIcon />} tone="border-[#4a97fd] bg-[#e2ecff] text-[#4a97fd]" />
            <StatCard label="Chưa cập nhật" value={61} icon={<ChecklistIcon cross />} tone="border-[#fba54c] bg-[#fff0e0] text-[#fba54c]" />
            <StatCard label="Đã cập nhật" value={0} icon={<ChecklistIcon />} tone="border-[#6ccfd5] bg-[#e6f7f7] text-[#6ccfd5]" />
          </div>
          <p className="mt-[11px]">Chọn <b className="font-bold text-[#4262f0]">Cập nhật tự động</b> để cập nhật trước các tài sản có loại tài sản trùng khớp với danh mục loại tài sản theo Quyết định số 06/2024/QĐ-UBND.</p>
        </div>
      </div>

      <footer className="flex h-12 items-center justify-end gap-2 border-t border-[#d3d3d3] pr-[15px]">
        <button className="h-8 w-[63px] rounded border border-[#d0d3db] text-[#212121]">Đóng</button>
        <button className="h-8 w-[125px] rounded bg-[#4262f0] font-medium text-white">Cập nhật tự động</button>
      </footer>
    </section>
  )
}

function Step({ n, className }: { n: number; className: string }) {
  return (
    <span className={clsx('absolute flex size-10 items-center justify-center rounded-full bg-[#fb4444] text-3xl text-white', className)}>{n}</span>
  )
}

// Numbered walkthrough marks laid over the page
function Callouts() {
  const box = 'absolute border-[3px] border-[#e21b1b]'
  return (
    <div className="pointer-events-none absolute inset-0 overflow-hidden">
      <div className={clsx(box, 'top-[158px] left-[3px] h-14 w-[207px]')} />
      <div className={clsx(box, 'top-[51px] right-[9px] h-11 w-12')} />
      <div className={clsx(box, 'top-[210px] right-[291px] h-[43px] w-[130px]')} />
      <div className={clsx(box, 'top-[213px] right-[19px] h-[39px] w-[272px]')} />
      <svg className="absolute top-[245px] right-[419px]" width="82" height="110" viewBox="0 0 82 110" aria-hidden="true">
        <path d="M76 7 26 80" stroke="#fb4444" strokeWidth="9" strokeDasharray="25 10" />
        <path d="M5 107 9 78 32 93z" fill="#fb4444" />
      </svg>
      <Step n={1} className="top-[152px] left-[191px]" />
      <Step n={2} className="top-[23px] right-11" />
      <Step n={3} className="top-[191px] right-1.5" />
      <Step n={4} className="top-[191px] right-[408px]" />
    </div>
  )
}

export default function App() {
  return (
    <div className="relative h-screen min-h-[720px] bg-white pb-6 font-[Roboto,sans-serif]">
      <div className="flex h-full border-2 border-[#a3a3a3]">
        <Sidebar />
        <div className="flex min-w-0 flex-1 flex-col bg-linear-to-b from-[#dfe2e6] via-[#d8dce5] to-[#d2d8e1]">
          <TopBar />
          <Toolbar />
          <main className="flex min-h-0 flex-1 pr-[15px] pb-2 pl-4">
            <div className="flex w-[49px] shrink-0 flex-col items-center gap-[23px] border-r border-[#9ea3a8] bg-linear-to-r from-white to-[#f1f6fa] pt-[15px] pl-0.5 text-[#555]">
              <button aria-label="Nhóm"><LayersIcon /></button>
              <button aria-label="Tìm kiếm"><Search size={21} strokeWidth={1.5} /></button>
              <button aria-label="Mở rộng" className="mt-auto mb-[11px] flex size-6 items-center justify-center rounded-full bg-[#4262f0] text-white">
                <ChevronRight size={18} strokeWidth={2} />
              </button>
            </div>
            <div className="ml-0.5 flex min-w-0 flex-1 flex-col border-l border-[#9ea3a8]">
              <AssetTable />
              <div className="h-[7px] shrink-0 bg-[#efefef]">
                <div className="h-full w-3/5 bg-[#d5d5d5]" />
              </div>
              <Pager />
              <div className="h-1 shrink-0 border-y border-[#a9abae] bg-white" />
              <div className="flex h-8 shrink-0 items-center justify-between bg-white pr-2.5 pl-4 text-[13px] font-medium">
                <a href="#" className="flex h-full items-center border-b-2 border-[#4262f0] text-[#4262f0]">Lịch sử biến động</a>
                <button aria-label="Mở" className="flex size-4 items-center justify-center rounded-full bg-[#e2e2e2] text-[#4262f0]">
                  <ChevronUp size={12} strokeWidth={3.5} />
                </button>
              </div>
            </div>
          </main>
        </div>
      </div>

      <button aria-label="Mở bảng bên" className="absolute top-[307px] right-0.5 flex h-[90px] w-[15px] items-center justify-center rounded-l-[5px] bg-[#4262f0] text-white">
        <ChevronLeft size={13} strokeWidth={3} />
      </button>

      <PopupMenus />
      <UpdateDialog />
      <Callouts />
    </div>
  )
}
